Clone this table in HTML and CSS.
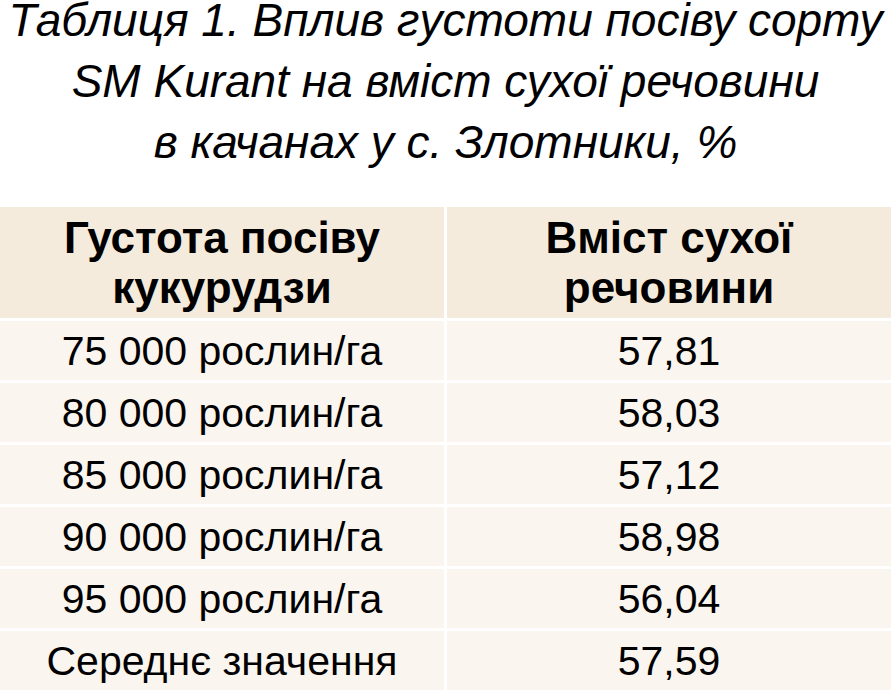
FILE: index.html
```html
<!DOCTYPE html>
<html lang="uk">
<head>
<meta charset="utf-8">
<link rel="stylesheet" href="styles.css">
</head>
<body>
<h1 class="title">Таблиця 1. Вплив густоти посіву сорту<br>SM Kurant на вміст сухої речовини<br>в качанах у с. Злотники, %</h1>
<div class="table">
  <div class="cell head">Густота посіву<br>кукурудзи</div>
  <div class="cell head">Вміст сухої<br>речовини</div>
  <div class="cell">75 000 рослин/га</div><div class="cell">57,81</div>
  <div class="cell">80 000 рослин/га</div><div class="cell">58,03</div>
  <div class="cell">85 000 рослин/га</div><div class="cell">57,12</div>
  <div class="cell">90 000 рослин/га</div><div class="cell">58,98</div>
  <div class="cell">95 000 рослин/га</div><div class="cell">56,04</div>
  <div class="cell">Середнє значення</div><div class="cell">57,59</div>
</div>
</body>
</html>
```
FILE: styles.css
```css
html, body { margin: 0; padding: 0; background: #fff; }
body { font-family: "Liberation Sans", Arial, sans-serif; color: #000; overflow: hidden; }
.title {
  margin: -10px -10px 34px;
  font-size: 46px;
  font-style: italic;
  font-weight: normal;
  line-height: 61px;
  text-align: center;
  white-space: nowrap;
}
.table {
  display: grid;
  grid-template-columns: 444px 444px;
  grid-template-rows: 111px repeat(6, 59px);
  gap: 3px;
}
.cell {
  background: #faf5ee;
  display: flex;
  align-items: center;
  justify-content: center;
  text-align: center;
  font-size: 41px;
  line-height: 48px;
}
.head {
  background: #f5ebdc;
  font-weight: bold;
  font-size: 44px;
  line-height: 50px;
}
```
